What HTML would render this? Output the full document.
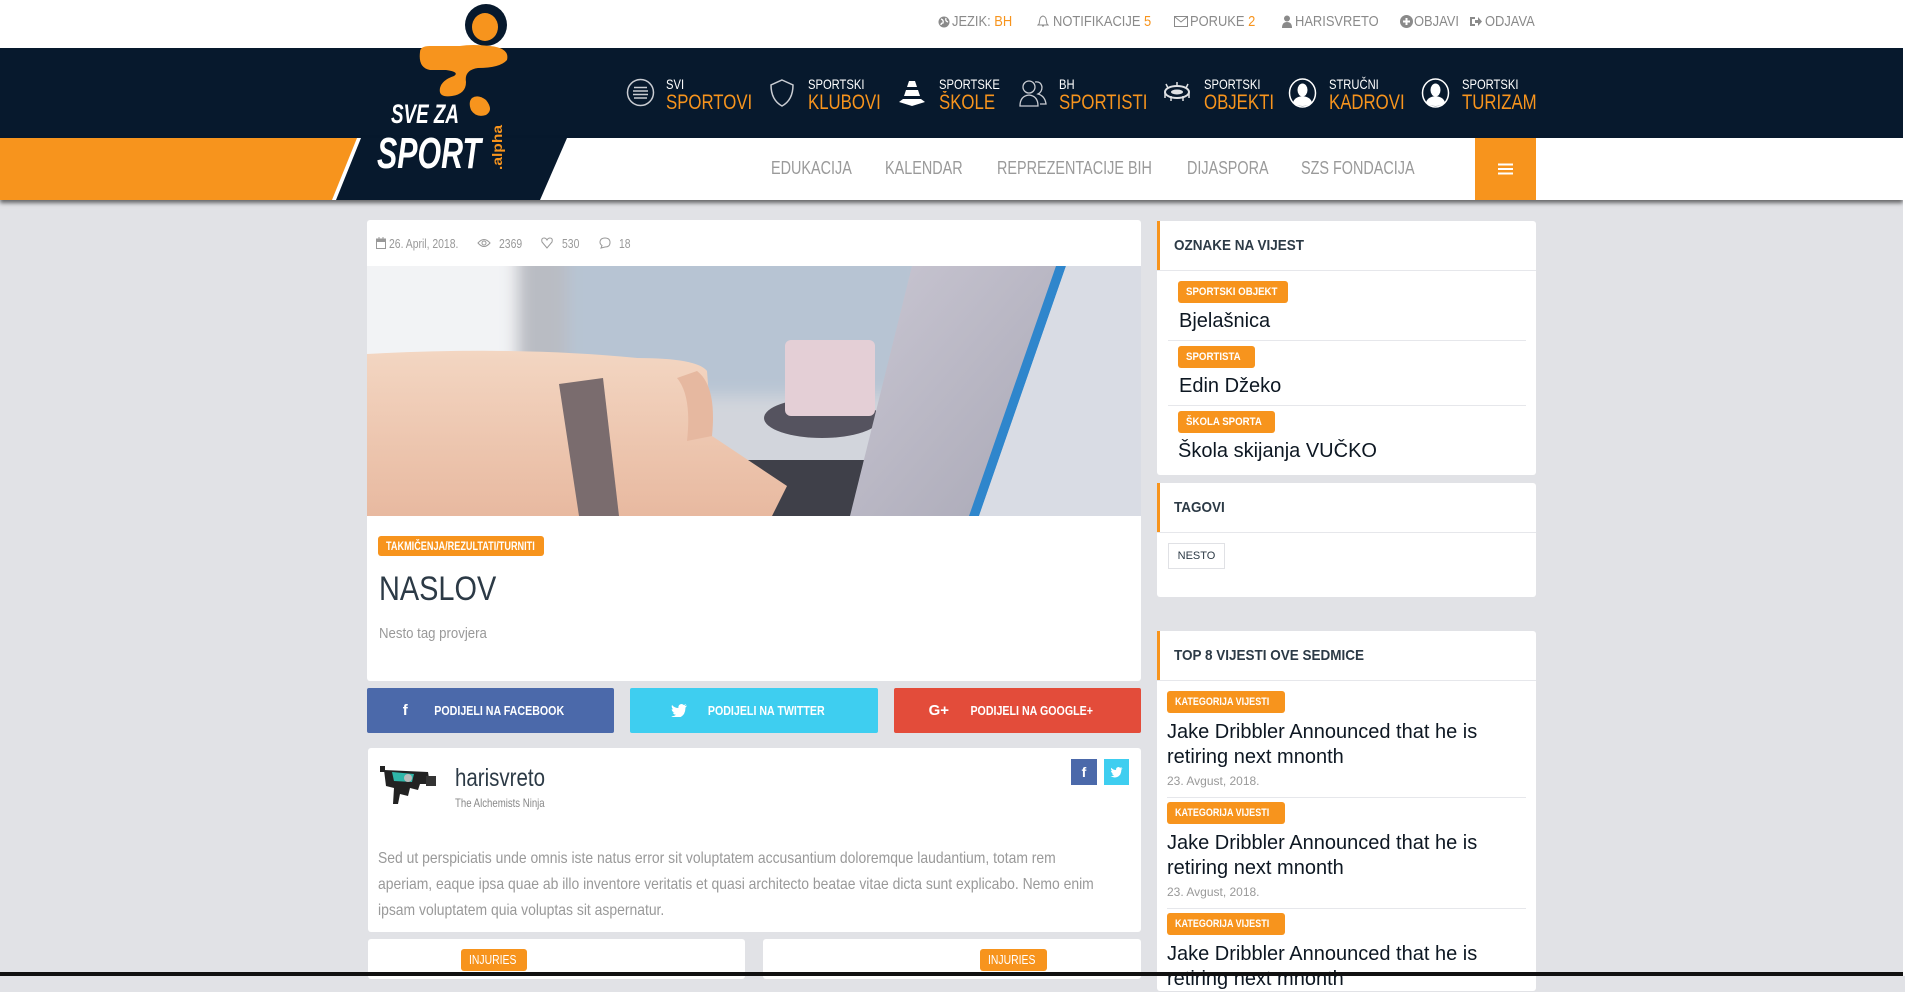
<!DOCTYPE html>
<html><head><meta charset="utf-8">
<style>
*{margin:0;padding:0;box-sizing:border-box}
body{width:1905px;height:976px;overflow:hidden;background:#e1e2e6;font-family:"Liberation Sans",sans-serif;position:relative}
.a{position:absolute;white-space:nowrap}
.c{display:inline-block;transform:scaleX(.8);transform-origin:0 50%}
.top{color:#8a8a8a;font-size:15px;top:13px}
.top .c{transform:scaleX(.86)}
.or{color:#f7941d}
.nv1{color:#fff;font-size:14px;top:76px}
.nv2{color:#f7941d;font-size:21px;top:91px;font-weight:500}
.sub{color:#9a9a9a;font-size:18px;top:158px}
.card{position:absolute;background:#fff;border-radius:3px}
.tag{position:absolute;background:#f7941d;color:#fff;border-radius:3px;font-size:11px;font-weight:bold;line-height:21px;padding-left:8px;white-space:nowrap;overflow:hidden}
.tag .c{transform:scaleX(.88)}
.sh{position:absolute;color:#fff;font-size:13px;font-weight:bold;line-height:45px;text-align:center;border-radius:2px}
.shd{position:absolute;left:0;right:0;height:1px;background:#e6e7eb}
.st{position:absolute;left:17px;font-size:15px;color:#2c3a46;font-weight:bold;top:16px}
.ob{position:absolute;left:0;top:0;width:3px;height:49px;background:#f7941d}
.nm{position:absolute;font-size:20px;color:#0d1722}
.jk{position:absolute;left:10px;width:360px;font-size:20px;line-height:25px;color:#0d1722}
.dt{position:absolute;left:10px;font-size:12px;color:#999}
</style></head><body>
<div class="a" style="left:0;top:0;width:1905px;height:48px;background:#fff"></div>
<svg class="a" style="left:938px;top:16px" width="12" height="12"><circle cx="6" cy="6" r="5.5" fill="#8a8a8a"/><path d="M3 3 q3 1 2 4 q-2 0 -2 2 M8 2 q-1 3 2 4" stroke="#fff" stroke-width="1.3" fill="none"/></svg>
<div class="a top" style="left:952px"><span class="c">JEZIK: <span class="or">BH</span></span></div>
<svg class="a" style="left:1037px;top:15px" width="12" height="13"><path d="M6 1 C2 2 3 6 2 9 L1 10 H11 L10 9 C9 6 10 2 6 1 Z M5 11 h2" stroke="#8a8a8a" fill="none"/></svg>
<div class="a top" style="left:1053px"><span class="c">NOTIFIKACIJE <span class="or">5</span></span></div>
<svg class="a" style="left:1174px;top:16px" width="14" height="11"><rect x=".5" y=".5" width="13" height="10" stroke="#8a8a8a" fill="none"/><path d="M1 1 L7 6 L13 1" stroke="#8a8a8a" fill="none"/></svg>
<div class="a top" style="left:1190px"><span class="c">PORUKE <span class="or">2</span></span></div>
<svg class="a" style="left:1282px;top:15px" width="10" height="13"><circle cx="5" cy="3.5" r="3" fill="#8a8a8a"/><path d="M0 13 q0-6 5-6 q5 0 5 6z" fill="#8a8a8a"/></svg>
<div class="a top" style="left:1295px"><span class="c">HARISVRETO</span></div>
<svg class="a" style="left:1400px;top:15px" width="13" height="13"><circle cx="6.5" cy="6.5" r="6.5" fill="#8a8a8a"/><path d="M6.5 3v7M3 6.5h7" stroke="#fff" stroke-width="2"/></svg>
<div class="a top" style="left:1414px"><span class="c">OBJAVI</span></div>
<svg class="a" style="left:1469px;top:15px" width="13" height="13"><path d="M1 2h5v2H3v5h3v2H1z" fill="#8a8a8a"/><path d="M6 5h3V2l4 4.5L9 11V8H6z" fill="#8a8a8a"/></svg>
<div class="a top" style="left:1485px"><span class="c">ODJAVA</span></div>

<div class="a" style="left:0;top:48px;width:1903px;height:90px;background:#07192d"></div>
<div class="a" style="left:0;top:138px;width:1903px;height:62px;background:#fff;box-shadow:0 3px 4px rgba(0,0,0,.55)"></div>
<svg class="a" style="left:0;top:138px" width="600" height="62"><polygon points="0,0 357,0 332,62 0,62" fill="#f7941d"/><polygon points="361,0 567,0 540,62 336,62" fill="#07192d"/></svg>
<svg class="a" style="left:360px;top:0" width="160" height="175">
<circle cx="126" cy="25" r="21" fill="#07192d"/>
<path d="M60 52 Q60 46 70 46 L100 46 Q112 44 130 46 Q150 48 147 60 Q140 68 118 68 Q104 70 106 82 Q106 94 92 96 Q78 98 80 88 Q82 80 94 76 Q100 72 86 70 L70 70 Q58 68 60 52Z" fill="#f7941d"/>
<ellipse cx="125" cy="27" rx="13" ry="14" fill="#f7941d"/>
<path d="M112 98 Q118 94 126 100 Q134 110 126 115 Q116 118 111 110 Q108 102 112 98Z" fill="#f7941d"/>
<text x="31" y="123" fill="#fff" font-family="Liberation Sans" font-weight="bold" font-style="italic" font-size="27" textLength="68" lengthAdjust="spacingAndGlyphs">SVE ZA</text>
<text x="17" y="168" fill="#fff" font-family="Liberation Sans" font-weight="bold" font-style="italic" font-size="44" textLength="104" lengthAdjust="spacingAndGlyphs">SPORT</text>
<text transform="translate(142,170) rotate(-90)" fill="#f7941d" font-family="Liberation Sans" font-weight="bold" font-size="14" textLength="45" lengthAdjust="spacingAndGlyphs">.alpha</text>
</svg>

<svg class="a" style="left:626px;top:78px" width="29" height="29"><circle cx="14.5" cy="14.5" r="13" stroke="#c9ccd2" stroke-width="1.5" fill="none"/><path d="M8 9.5h13M7 13h15M7 16.5h15M8 20h13" stroke="#c9ccd2" stroke-width="1.6"/></svg>
<div class="a nv1" style="left:666px"><span class="c">SVI</span></div>
<div class="a nv2" style="left:666px"><span class="c">SPORTOVI</span></div>
<svg class="a" style="left:769px;top:78px" width="26" height="30"><path d="M13 2 L24 7 Q24 22 13 28 Q2 22 2 7 Z" stroke="#c9ccd2" stroke-width="1.5" fill="none"/></svg>
<div class="a nv1" style="left:808px"><span class="c">SPORTSKI</span></div>
<div class="a nv2" style="left:808px"><span class="c">KLUBOVI</span></div>
<svg class="a" style="left:898px;top:79px" width="28" height="28"><path d="M11 2h6l2 6h-10z M8 11h12l2 6H6z M5 20h18l4 3-13 4-13-4z" fill="#fff"/></svg>
<div class="a nv1" style="left:939px"><span class="c">SPORTSKE</span></div>
<div class="a nv2" style="left:939px"><span class="c">ŠKOLE</span></div>
<svg class="a" style="left:1018px;top:78px" width="30" height="30"><circle cx="11" cy="9" r="6" stroke="#c9ccd2" fill="none" stroke-width="1.3"/><path d="M2 28 q0-10 9-11 q9 1 9 11z" stroke="#c9ccd2" fill="none" stroke-width="1.3"/><path d="M17 4 q6-1 7 5 q0 5-4 7 q7 2 8 10h-6" stroke="#c9ccd2" fill="none" stroke-width="1.3"/></svg>
<div class="a nv1" style="left:1059px"><span class="c">BH</span></div>
<div class="a nv2" style="left:1059px"><span class="c">SPORTISTI</span></div>
<svg class="a" style="left:1162px;top:80px" width="30" height="24"><ellipse cx="15" cy="12" rx="12" ry="6" stroke="#dfe1e4" stroke-width="2" fill="none"/><ellipse cx="15" cy="12" rx="6" ry="2.5" fill="#dfe1e4"/><path d="M3 12v6M27 12v6M9 16v5M21 16v5M4 4l2 4M26 4l-2 4M15 2v4" stroke="#dfe1e4" stroke-width="1.5"/></svg>
<div class="a nv1" style="left:1204px"><span class="c">SPORTSKI</span></div>
<div class="a nv2" style="left:1204px"><span class="c">OBJEKTI</span></div>
<svg class="a" style="left:1288px;top:78px" width="29" height="30"><ellipse cx="14.5" cy="15" rx="13" ry="14" stroke="#fff" stroke-width="1.5" fill="none"/><ellipse cx="14.5" cy="12" rx="5" ry="6.5" fill="#fff"/><path d="M5 25 q1-6 9.5-7 q8.5 1 9.5 7 q-4 3-9.5 3 q-5.5 0-9.5-3z" fill="#fff"/></svg>
<div class="a nv1" style="left:1329px"><span class="c">STRUČNI</span></div>
<div class="a nv2" style="left:1329px"><span class="c">KADROVI</span></div>
<svg class="a" style="left:1421px;top:78px" width="29" height="30"><ellipse cx="14.5" cy="15" rx="13" ry="14" stroke="#fff" stroke-width="1.5" fill="none"/><ellipse cx="14.5" cy="12" rx="5" ry="6.5" fill="#fff"/><path d="M5 25 q1-6 9.5-7 q8.5 1 9.5 7 q-4 3-9.5 3 q-5.5 0-9.5-3z" fill="#fff"/></svg>
<div class="a nv1" style="left:1462px"><span class="c">SPORTSKI</span></div>
<div class="a nv2" style="left:1462px"><span class="c">TURIZAM</span></div>

<div class="a sub" style="left:771px"><span class="c">EDUKACIJA</span></div>
<div class="a sub" style="left:885px"><span class="c">KALENDAR</span></div>
<div class="a sub" style="left:997px"><span class="c">REPREZENTACIJE BIH</span></div>
<div class="a sub" style="left:1187px"><span class="c">DIJASPORA</span></div>
<div class="a sub" style="left:1301px"><span class="c">SZS FONDACIJA</span></div>
<div class="a" style="left:1475px;top:138px;width:61px;height:62px;background:#f7941d"></div>
<svg class="a" style="left:1498px;top:163px" width="15" height="12"><path d="M0 1.5h15M0 6h15M0 10.5h15" stroke="#fff" stroke-width="2"/></svg>

<div class="card" style="left:367px;top:220px;width:774px;height:461px">
  <svg class="a" style="left:9px;top:17px" width="10" height="12"><rect x=".5" y="2" width="9" height="9.5" stroke="#999" fill="none"/><rect x="0" y="2" width="10" height="3" fill="#999"/><path d="M3 0v3M7 0v3" stroke="#999"/></svg>
  <div class="a" style="left:22px;top:16px;font-size:13px;color:#999"><span class="c">26. April, 2018.</span></div>
  <svg class="a" style="left:110px;top:18px" width="14" height="10"><path d="M1 5 Q7 -2 13 5 Q7 12 1 5Z" stroke="#999" fill="none"/><circle cx="7" cy="5" r="2" stroke="#999" fill="none"/></svg>
  <div class="a" style="left:132px;top:16px;font-size:13px;color:#999"><span class="c">2369</span></div>
  <svg class="a" style="left:174px;top:17px" width="12" height="12"><path d="M6 11 L1 5 Q0 1 3 1 Q5 1 6 3 Q7 1 9 1 Q12 1 11 5Z" stroke="#999" fill="none"/></svg>
  <div class="a" style="left:195px;top:16px;font-size:13px;color:#999"><span class="c">530</span></div>
  <svg class="a" style="left:232px;top:17px" width="12" height="12"><path d="M6 1 Q11 1 11 5.5 Q11 10 6 10 L2 11 L3 8.5 Q1 7 1 5.5 Q1 1 6 1Z" stroke="#999" fill="none"/></svg>
  <div class="a" style="left:252px;top:16px;font-size:13px;color:#999"><span class="c">18</span></div>
  <svg class="a" style="left:0;top:46px" width="774" height="250">
    <defs>
      <linearGradient id="np" x1="0" y1="0" x2="0" y2="1"><stop offset="0" stop-color="#f3d6c2"/><stop offset="1" stop-color="#e8b9a0"/></linearGradient>
      <linearGradient id="sc" x1="0" y1="0" x2="1" y2="1"><stop offset="0" stop-color="#c9c6d2"/><stop offset="1" stop-color="#a9a8b6"/></linearGradient>
      <filter id="bl"><feGaussianBlur stdDeviation="8"/></filter>
    </defs>
    <rect width="774" height="250" fill="#dfe2e7"/>
    <g filter="url(#bl)">
      <rect x="-20" y="-20" width="180" height="160" fill="#f2f3f5"/>
      <rect x="150" y="-20" width="50" height="160" fill="#b9bcc3"/>
      <rect x="200" y="-20" width="360" height="150" fill="#b7c4d3"/>
      <rect x="0" y="130" width="774" height="140" fill="#d2d5dc"/>
    </g>
    <ellipse cx="455" cy="152" rx="58" ry="20" fill="#55535f"/>
    <rect x="418" y="74" width="90" height="76" rx="6" fill="#e4cfd6"/>
    <rect x="289" y="194" width="220" height="56" fill="#3f4049"/>
    <path d="M0 88 Q150 80 270 92 Q330 92 340 105 L345 170 L420 220 L405 250 L0 250Z" fill="url(#np)"/>
    <path d="M192 118 L236 112 L252 250 L212 250Z" fill="#7a6c6e"/>
    <path d="M330 105 Q350 120 345 170 L320 175 Q325 130 310 112Z" fill="#e6b8a0"/>
    <path d="M545 0 L692 0 L605 250 L483 250Z" fill="url(#sc)"/>
    <path d="M689 0 L699 0 L612 250 L602 250Z" fill="#2f86cc"/>
    <path d="M699 0 L774 0 L774 250 L612 250Z" fill="#d9dce4"/>
  </svg>
  <div class="tag" style="left:11px;top:316px;width:166px;height:20px;line-height:20px;font-size:12px"><span class="c" style="transform:scaleX(.76)">TAKMIČENJA/REZULTATI/TURNITI</span></div>
  <div class="a" style="left:12px;top:350px;font-size:34px;color:#2c3a46;font-weight:500"><span class="c" style="transform:scaleX(.85)">NASLOV</span></div>
  <div class="a" style="left:12px;top:405px;font-size:15px;color:#999"><span class="c" style="transform:scaleX(.88)">Nesto tag provjera</span></div>
</div>

<div class="sh" style="left:367px;top:688px;width:247px;background:#4b69aa"><span style="font-size:15px;margin-right:12px">f</span><span class="c" style="transform-origin:50% 50%;transform:scaleX(.82)">PODIJELI NA FACEBOOK</span></div>
<div class="sh" style="left:630px;top:688px;width:248px;background:#3ecef0"><svg width="16" height="13" style="vertical-align:-2px;margin-right:8px"><path d="M16 1.5 Q14.5 2.2 13.5 2 Q15 1 15.2 0 Q14 .8 12.8 1 Q10.5-1 8.2 1 Q7 2.5 7.5 4 Q3.5 4 1 1 Q0 3.5 2.2 5.4 Q1.3 5.4.7 5 Q.8 7.8 3.5 8.5 Q2.6 8.8 1.8 8.6 Q2.7 10.7 5 10.8 Q3 12.5 0 12.3 Q8 16.5 13 10 Q14.5 7 14.5 3.5 Q15.5 2.7 16 1.5Z" fill="#fff"/></svg><span class="c" style="transform-origin:50% 50%;transform:scaleX(.82)">PODIJELI NA TWITTER</span></div>
<div class="sh" style="left:894px;top:688px;width:247px;background:#e34c3a"><span style="font-size:15px;margin-right:8px">G+</span><span class="c" style="transform-origin:50% 50%;transform:scaleX(.82)">PODIJELI NA GOOGLE+</span></div>

<div class="card" style="left:368px;top:748px;width:773px;height:184px">
  <svg class="a" style="left:12px;top:16px" width="58" height="40"><path d="M4 6 L48 8 L50 20 L40 20 L38 26 L30 24 L28 32 L20 30 L18 40 L13 40 L14 24 L6 22 Z" fill="#222"/><path d="M12 8 L34 10 L32 18 L14 17Z" fill="#2fb6a9"/><circle cx="28" cy="14" r="4" fill="#bbb"/><rect x="0" y="2" width="5" height="6" fill="#222"/><rect x="46" y="12" width="10" height="10" fill="#333"/></svg>
  <div class="a" style="left:87px;top:16px;font-size:25px;color:#2c3a46"><span class="c" style="transform:scaleX(.82)">harisvreto</span></div>
  <div class="a" style="left:87px;top:48px;font-size:12px;color:#888"><span class="c">The Alchemists Ninja</span></div>
  <div class="a" style="left:703px;top:11px;width:26px;height:26px;background:#4b69aa;color:#fff;font-weight:bold;font-size:14px;text-align:center;line-height:26px">f</div>
  <div class="a" style="left:736px;top:11px;width:25px;height:26px;background:#3ecef0"><svg width="25" height="26"><path transform="translate(6.5 8) scale(.75)" d="M16 1.5 Q14.5 2.2 13.5 2 Q15 1 15.2 0 Q14 .8 12.8 1 Q10.5-1 8.2 1 Q7 2.5 7.5 4 Q3.5 4 1 1 Q0 3.5 2.2 5.4 Q1.3 5.4.7 5 Q.8 7.8 3.5 8.5 Q2.6 8.8 1.8 8.6 Q2.7 10.7 5 10.8 Q3 12.5 0 12.3 Q8 16.5 13 10 Q14.5 7 14.5 3.5 Q15.5 2.7 16 1.5Z" fill="#fff"/></svg></div>
  <div class="a" style="left:10px;top:98px;width:900px;font-size:16px;line-height:26px;color:#999;white-space:normal;transform:scaleX(.87);transform-origin:0 0">Sed ut perspiciatis unde omnis iste natus error sit voluptatem accusantium doloremque laudantium, totam rem<br>aperiam, eaque ipsa quae ab illo inventore veritatis et quasi architecto beatae vitae dicta sunt explicabo. Nemo enim<br>ipsam voluptatem quia voluptas sit aspernatur.</div>
</div>
<div class="card" style="left:368px;top:939px;width:377px;height:40px"></div>
<div class="card" style="left:763px;top:939px;width:378px;height:40px"></div>
<div class="tag" style="left:461px;top:949px;width:66px;height:22px;line-height:22px;font-weight:500;font-size:13px"><span class="c" style="transform:scaleX(.8)">INJURIES</span></div>
<div class="tag" style="left:980px;top:949px;width:67px;height:22px;line-height:22px;font-weight:500;font-size:13px"><span class="c" style="transform:scaleX(.8)">INJURIES</span></div>

<div class="card" style="left:1157px;top:221px;width:379px;height:254px">
  <div class="ob"></div>
  <div class="st"><span class="c" style="transform:scaleX(.9)">OZNAKE NA VIJEST</span></div>
  <div class="shd" style="top:49px"></div>
  <div class="tag" style="left:21px;top:60px;width:110px;height:22px;line-height:22px"><span class="c">SPORTSKI OBJEKT</span></div>
  <div class="nm" style="left:22px;top:89px">Bjelašnica</div>
  <div class="shd" style="top:119px;left:11px;right:10px"></div>
  <div class="tag" style="left:21px;top:125px;width:77px;height:22px;line-height:22px"><span class="c">SPORTISTA</span></div>
  <div class="nm" style="left:22px;top:154px">Edin Džeko</div>
  <div class="shd" style="top:184px;left:11px;right:10px"></div>
  <div class="tag" style="left:21px;top:190px;width:97px;height:22px;line-height:22px"><span class="c">ŠKOLA SPORTA</span></div>
  <div class="nm" style="left:21px;top:219px">Škola skijanja VUČKO</div>
</div>
<div class="card" style="left:1157px;top:483px;width:379px;height:114px">
  <div class="ob"></div>
  <div class="st"><span class="c" style="transform:scaleX(.9)">TAGOVI</span></div>
  <div class="shd" style="top:49px"></div>
  <div class="a" style="left:11px;top:60px;width:57px;height:26px;border:1px solid #e0e1e5;font-size:11px;color:#2c3a46;text-align:center;line-height:24px">NESTO</div>
</div>
<div class="card" style="left:1157px;top:631px;width:379px;height:360px">
  <div class="ob"></div>
  <div class="st"><span class="c" style="transform:scaleX(.9)">TOP 8 VIJESTI OVE SEDMICE</span></div>
  <div class="shd" style="top:49px"></div>
  <div class="tag" style="left:10px;top:60px;width:118px;height:22px;line-height:22px"><span class="c" style="transform:scaleX(.82)">KATEGORIJA VIJESTI</span></div>
  <div class="jk" style="top:89px">Jake Dribbler Announced that he is retiring next mnonth</div>
  <div class="dt" style="top:143px">23. Avgust, 2018.</div>
  <div class="shd" style="top:166px;left:10px;right:10px"></div>
  <div class="tag" style="left:10px;top:171px;width:118px;height:22px;line-height:22px"><span class="c" style="transform:scaleX(.82)">KATEGORIJA VIJESTI</span></div>
  <div class="jk" style="top:200px">Jake Dribbler Announced that he is retiring next mnonth</div>
  <div class="dt" style="top:254px">23. Avgust, 2018.</div>
  <div class="shd" style="top:277px;left:10px;right:10px"></div>
  <div class="tag" style="left:10px;top:282px;width:118px;height:22px;line-height:22px"><span class="c" style="transform:scaleX(.82)">KATEGORIJA VIJESTI</span></div>
  <div class="jk" style="top:311px">Jake Dribbler Announced that he is retiring next mnonth</div>
</div>
<div class="a" style="left:0;top:972px;width:1905px;height:4px;background:#111"></div>
<div class="a" style="left:1903px;top:0;width:2px;height:976px;background:#fff"></div>
</body></html>
